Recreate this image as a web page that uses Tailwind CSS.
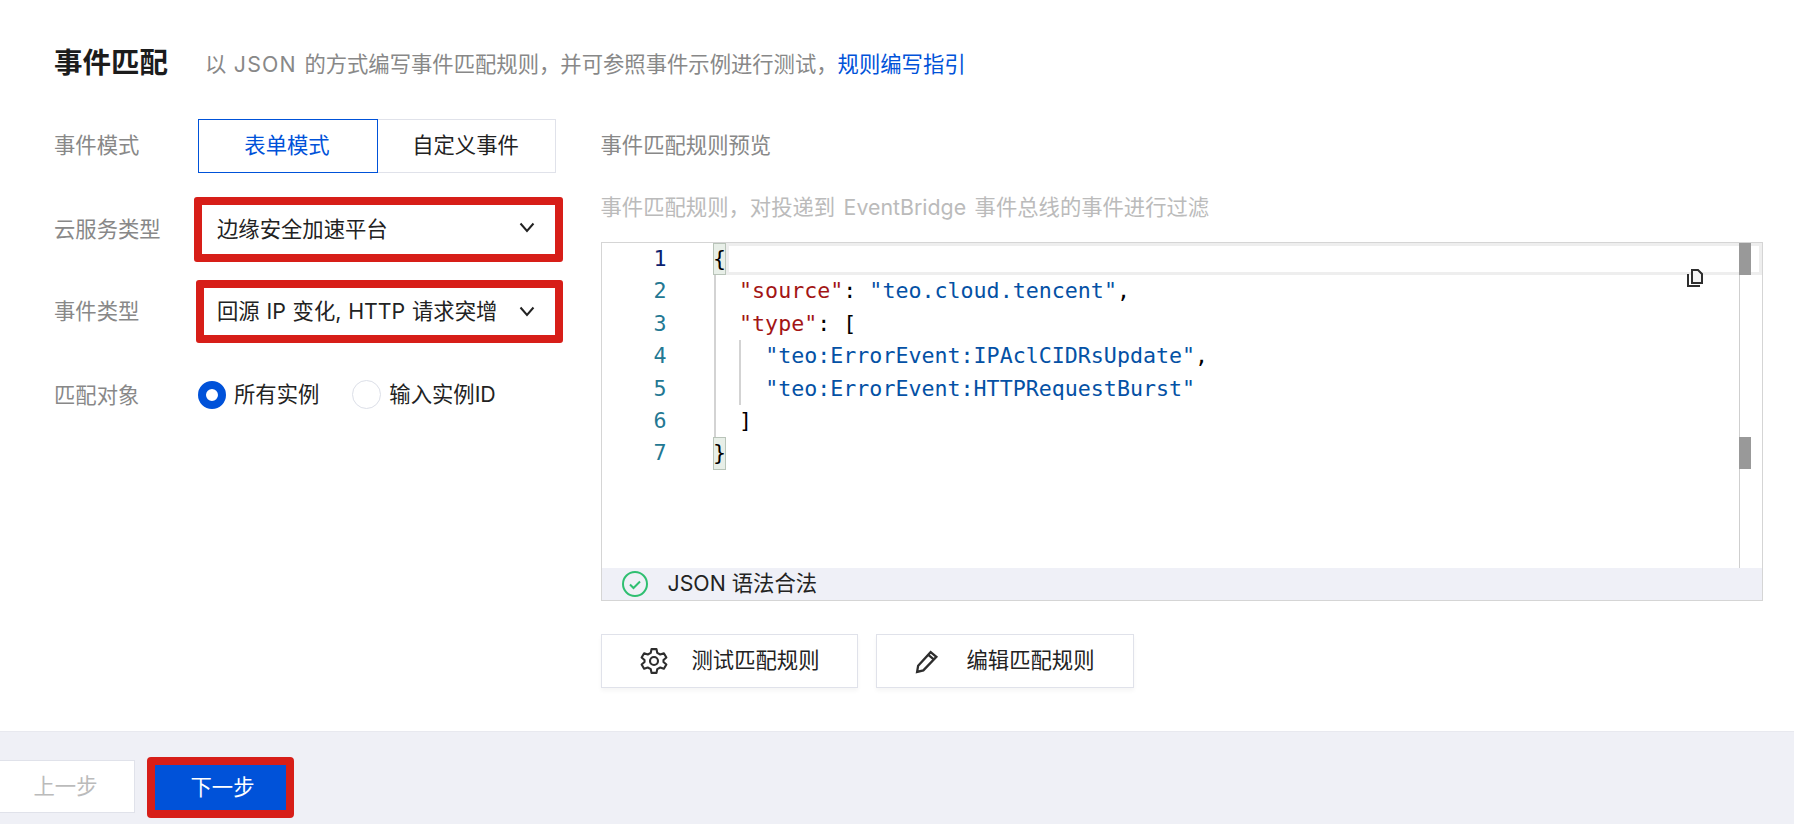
<!doctype html>
<html lang="zh">
<head>
<meta charset="utf-8">
<script src="https://cdn.jsdelivr.net/npm/@tailwindcss/browser@4"></script>
</head>
<body class="m-0 bg-white overflow-hidden">
<div class="w-[1794px] h-[824px] flex flex-col font-['Inter','Noto_Sans_CJK_SC',sans-serif] text-[21.33px] text-[#222]">
  <main class="h-[731px] bg-white pl-[54px] shrink-0">
    <div class="flex items-center h-[40px] mt-[43px]">
      <h1 class="text-[28.5px] font-bold text-[#1c1c1c] leading-none">事件匹配</h1>
      <p class="ml-[37px] text-[#888] mt-[3px] [word-spacing:1.5px]">以 <span class="tracking-[1.2px]">JSON</span> 的方式编写事件匹配规则，并可参照事件示例进行测试，<span class="text-[#0052d9]">规则编写指引</span></p>
    </div>
    <div class="flex mt-[36px]">
      <section class="w-[546.500px] shrink-0">
        <div class="flex items-center h-[54px]">
          <span class="w-[144px] text-[#888]">事件模式</span>
          <div class="flex h-[54px]">
            <button class="w-[180px] pr-[2px] border border-[#0052d9] text-[#0052d9]">表单模式</button>
            <button class="w-[178px] pr-[2px] border border-l-0 border-[#e0e2ea]">自定义事件</button>
          </div>
        </div>
        <div class="flex items-center mt-[24px] h-[65px]">
          <span class="w-[140px] text-[#888]">云服务类型</span>
          <div class="w-[369px] h-[65px] border-[8px] border-[#d71e18] rounded-[3px] flex items-center justify-between pl-[15px] pr-[20px]">
            <span class="leading-none">边缘安全加速平台</span>
            <svg width="16" height="11" viewBox="0 0 16 11" fill="none" stroke="#222" stroke-width="2" class="mb-[5px]"><path d="M1.5 1.5L8 9l6.5-7.5"/></svg>
          </div>
        </div>
        <div class="flex items-center mt-[18px] h-[63px]">
          <span class="w-[142px] text-[#888]">事件类型</span>
          <div class="w-[367px] h-[63px] border-[8px] border-[#d71e18] rounded-[3px] flex items-center justify-between pl-[13px] pr-[20px]">
            <span class="whitespace-nowrap leading-none [word-spacing:0.8px]">回源 IP 变化, HTTP 请求突增</span>
            <svg width="16" height="11" viewBox="0 0 16 11" fill="none" stroke="#222" stroke-width="2" class="mb-[1px]"><path d="M1.5 1.5L8 9l6.5-7.5"/></svg>
          </div>
        </div>
        <div class="flex items-center mt-[37px] h-[29px]">
          <span class="w-[144px] text-[#888] mt-[2px]">匹配对象</span>
          <div class="w-[28px] h-[28px] rounded-full border-[8px] border-[#0052d9] bg-white"></div>
          <span class="ml-[8px]">所有实例</span>
          <div class="ml-[33px] w-[29px] h-[29px] rounded-full border border-[#dcdfe8] bg-white"></div>
          <span class="ml-[8px]">输入实例ID</span>
        </div>
      </section>
      <section class="w-[1162px] shrink-0">
        <div class="h-[54px] flex items-center text-[#888]">事件匹配规则预览</div>
        <div class="h-[66px] mt-[3px] pb-[3px] flex items-center text-[#bbb] [word-spacing:2.5px]">事件匹配规则，对投递到 EventBridge 事件总线的事件进行过滤</div>
        <div class="relative h-[359px] border border-[#d5d5d5]">
          <div class="absolute left-[124px] top-0 w-[1036px] h-[32px] border-[3px] border-[#eeeeee]"></div>
          <div class="absolute left-[111px] top-0 w-[13px] h-[32px] bg-[#e8efe8] border border-[#b9c4b9]"></div>
          <div class="absolute left-[111px] top-[194px] w-[13px] h-[33px] bg-[#e8efe8] border border-[#b9c4b9]"></div>
          <div class="absolute left-[112px] top-[32px] h-[162px] w-[2px] bg-[#d3d3d3]"></div>
          <div class="absolute left-[137px] top-[97px] w-[2px] h-[65px] bg-[#d3d3d3]"></div>
          <div class="relative flex font-['DejaVu_Sans_Mono',monospace] text-[21.65px] leading-[32.4px]">
            <div class="w-[65px] text-right text-[#237893]">
              <div class="text-[#0b216f]">1</div><div>2</div><div>3</div><div>4</div><div>5</div><div>6</div><div>7</div>
            </div>
            <div class="ml-[46.500px] text-[#000]">
              <div class="whitespace-pre">{</div>
              <div class="whitespace-pre">  <span class="text-[#a31515]">"source"</span>: <span class="text-[#0451a5]">"teo.cloud.tencent"</span>,</div>
              <div class="whitespace-pre">  <span class="text-[#a31515]">"type"</span>: [</div>
              <div class="whitespace-pre">    <span class="text-[#0451a5]">"teo:ErrorEvent:IPAclCIDRsUpdate"</span>,</div>
              <div class="whitespace-pre">    <span class="text-[#0451a5]">"teo:ErrorEvent:HTTPRequestBurst"</span></div>
              <div class="whitespace-pre">  ]</div>
              <div class="whitespace-pre">}</div>
            </div>
          </div>
          <div class="absolute left-[1137px] top-0 bottom-0 w-px bg-[#cfcfcf]"></div>
          <div class="absolute left-[1137px] top-0 w-[12px] h-[32px] bg-[#999]"></div>
          <div class="absolute left-[1137px] top-[194px] w-[12px] h-[32px] bg-[#999]"></div>
          <svg class="absolute left-[1084px] top-[25px]" width="18" height="20" viewBox="0 0 18 20" fill="none" stroke="#2e2e2e" stroke-width="2"><path d="M6 2h6l4 4v9H6z" fill="#f4f4f4"/><path d="M2 6v12h12"/></svg>
          <div class="absolute left-0 right-0 bottom-0 h-[32px] bg-[#eff0f7] flex items-center">
            <svg class="ml-[20px] shrink-0" width="26" height="26" viewBox="0 0 26 26" fill="none" stroke="#2fbf71" stroke-width="2"><circle cx="13" cy="13" r="12"/><path d="M8 13.5l3.5 3.5 6.5-6.5"/></svg>
            <span class="ml-[20px]">JSON 语法合法</span>
          </div>
        </div>
        <div class="flex gap-[18px] mt-[33px]">
          <button class="w-[257px] h-[54px] border border-[#e0e2ea] flex items-center justify-center shadow-[0_3px_4px_rgba(0,0,0,0.04)]">
            <svg width="30" height="30" viewBox="0 0 24 24" fill="none" stroke="#2e2e2e" stroke-width="1.7" stroke-linejoin="round"><path d="M10 2.5h4l.6 3 2.4 1.3 2.9-1 2 3.4-2.3 2v1.600l2.3 2-2 3.4-2.9-1-2.4 1.3-.6 3h-4l-.6-3-2.4-1.3-2.9 1-2-3.4 2.3-2v-1.600l-2.3-2 2-3.4 2.9 1 2.4-1.3z"/><circle cx="12" cy="12" r="3.2"/></svg>
            <span class="ml-[23px]">测试匹配规则</span>
          </button>
          <button class="w-[258px] h-[54px] border border-[#e0e2ea] flex items-center justify-center shadow-[0_3px_4px_rgba(0,0,0,0.04)]">
            <svg width="24" height="25" viewBox="0 0 23 24" fill="none" stroke="#2e2e2e" stroke-width="2.2"><path d="M2 22l1-6L15 3l5.500 4.500L8 20.500z"/><path d="M12.500 5.500l5.500 4.500"/></svg>
            <span class="ml-[28px]">编辑匹配规则</span>
          </button>
        </div>
      </section>
    </div>
  </main>
  <footer class="flex-1 bg-[#eff0f6] border-t border-[#e8e9ef] flex items-start relative">
    <button class="w-[135px] h-[53px] mt-[28px] bg-white border border-l-0 border-[#e0e2ea] text-[#bbb] pr-[3px]">上一步</button>
    <button class="w-[147px] h-[61px] ml-[12px] mt-[25px] bg-[#0052d9] border-[8px] border-[#d71e18] rounded-[4px] text-white pl-[4px]">下一步</button>
  </footer>
</div>
</body>
</html>
